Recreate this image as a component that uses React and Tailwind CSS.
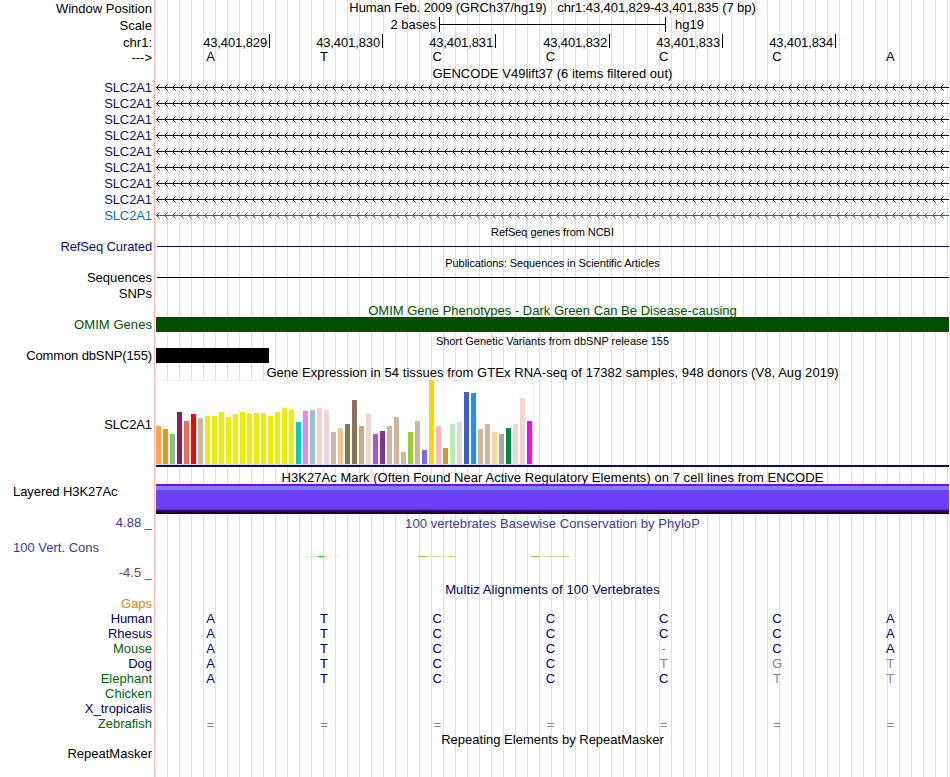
import clsx from 'clsx'

// label rows down the left side: text, row height, colour
const labels = [
  { text: 'Window Position', cls: 'h-[17px]' },
  { text: 'Scale', cls: 'h-[17px]' },
  { text: 'chr1:', cls: 'h-[15px]' },
  { text: '--->', cls: 'h-[30px]' },
  ...Array.from({ length: 8 }, () => ({ text: 'SLC2A1', cls: 'h-4 tracking-[-0.1px] text-[#0c0c78]' })),
  { text: 'SLC2A1', cls: 'h-[31px] tracking-[-0.1px] text-[#0c6cb0]' },
  { text: 'RefSeq Curated', cls: 'h-[31px] tracking-[-0.12px] text-[#0c0c78]' },
  { text: 'Sequences', cls: 'h-4' },
  { text: 'SNPs', cls: 'h-[31px]' },
  { text: 'OMIM Genes', cls: 'h-[31px] tracking-[0.06px] text-[#005000]' },
  { text: 'Common dbSNP(155)', cls: 'h-[69px] tracking-[-0.12px]' },
  { text: 'SLC2A1', cls: 'h-[67px] tracking-[-0.1px]' },
  { text: 'Layered H3K27Ac', cls: 'h-[31px] tracking-[-0.07px] text-left pl-[13px]' },
  { text: '4.88 _', cls: 'h-[25px] text-[#3c3c8c]' },
  { text: '100 Vert. Cons', cls: 'h-[25px] text-left pl-[13px] text-[#3c3c8c]' },
  { text: '-4.5 _', cls: 'h-[31px] text-[#8c3c3c]' },
  { text: 'Gaps', cls: 'h-[15px] text-[#e68a00]' },
  { text: 'Human', cls: 'h-[15px] tracking-[-0.12px] text-[#000064]' },
  { text: 'Rhesus', cls: 'h-[15px] text-[#000064]' },
  { text: 'Mouse', cls: 'h-[15px] text-[#006400]' },
  { text: 'Dog', cls: 'h-[15px] text-[#000064]' },
  { text: 'Elephant', cls: 'h-[15px] text-[#006400]' },
  { text: 'Chicken', cls: 'h-[15px] text-[#006400]' },
  { text: 'X_tropicalis', cls: 'h-[15px] text-[#000064]' },
  { text: 'Zebrafish', cls: 'h-[30px] text-[#006400]' },
  { text: 'RepeatMasker', cls: 'h-[31px]' },
]

const positions = [
  { text: '43,401,829', cls: 'w-[114px]' },
  { text: '43,401,830', cls: 'w-[113px]' },
  { text: '43,401,831', cls: 'w-[113px]' },
  { text: '43,401,832', cls: 'w-[114px]' },
  { text: '43,401,833', cls: 'w-[113px]' },
  { text: '43,401,834', cls: 'w-[113px]' },
]

// [height, colour] per tissue
const gtex = [
  [38, '#ffa54f'], [35, '#ee9a00'], [30, '#8fbc8f'], [52, '#8b1c62'], [43, '#ee6a50'], [50, '#ff0000'],
  [46, '#cdb79e'], [48, '#eeee00'], [48, '#eeee00'], [52, '#eeee00'], [47, '#eeee00'], [50, '#eeee00'],
  [52, '#eeee00'], [50, '#eeee00'], [51, '#eeee00'], [51, '#eeee00'], [48, '#eeee00'], [52, '#eeee00'],
  [56, '#eeee00'], [54, '#eeee00'], [42, '#00cdcd'], [53, '#ee82ee'], [54, '#9ac0cd'], [56, '#eed5d2'],
  [54, '#eed5d2'], [32, '#cdb79e'], [36, '#eec591'], [40, '#8b7355'], [64, '#8b7355'], [38, '#cdaa7d'],
  [50, '#eed5d2'], [30, '#b452cd'], [33, '#7a378b'], [38, '#cdb79e'], [47, '#cdb79e'], [12, '#cdb79e'],
  [32, '#9acd32'], [43, '#cdb79e'], [14, '#7a67ee'], [84, '#ffd700'], [38, '#ffb6c1'], [16, '#cd9b1d'],
  [40, '#b4eeb4'], [42, '#d9d9d9'], [72, '#3a5fcd'], [71, '#1e90ff'], [35, '#cdb79e'], [40, '#cdb79e'],
  [32, '#ffd39b'], [30, '#a6a6a6'], [36, '#008b45'], [40, '#eed5d2'], [66, '#eed5d2'], [43, '#ff00ff'],
]

// lower case marks a base that differs from the human one
const alignments = ['ATCCCCA', 'ATCCCCA', 'ATCC-CA', 'ATCCtgt', 'ATCCCtt', '       ', '       ', '=======']

function Title({ className, children }) {
  return <div className={clsx('text-center whitespace-pre shrink-0', className)}>{children}</div>
}

function Bases({ seq, className }) {
  return (
    <div className={clsx('grid grid-cols-7 w-[793px] -ml-0.5 text-center shrink-0', className)}>
      {seq.split('').map((b, i) => (
        <span key={i} className={clsx(/[a-z=-]/.test(b) && 'text-[#8282b4]', b === '=' && 'pt-px')}>
          {b.toUpperCase()}
        </span>
      ))}
    </div>
  )
}

function Intron({ id, className }) {
  return (
    <svg className={clsx('block h-4 w-[793px] shrink-0', className)} shapeRendering="crispEdges">
      <defs>
        <pattern id={id} x="0" y="0" width="8" height="16" patternUnits="userSpaceOnUse">
          <path d="M1 6h1v1h-1z M1 8h1v1h-1z M2 5h1v1h-1z M2 9h1v1h-1z" fill="currentColor" />
          <path d="M3 4h1v1h-1z M3 10h1v1h-1z" fill="currentColor" opacity="0.6" />
        </pattern>
      </defs>
      <rect width="793" height="16" fill={`url(#${id})`} />
      <rect y="7" width="793" height="1" fill="currentColor" />
    </svg>
  )
}

function Conservation() {
  return (
    <div className="flex h-px mt-[25px] mb-[25px] shrink-0">
      <div className="w-4 ml-[146px] bg-[#dcffdc]" />
      <div className="w-1.5 bg-[#00f000]" />
      <div className="w-4 bg-[#dcffdc]" />
      <div className="w-2 ml-[78px] bg-[#bcb43c]" />
      <div className="w-[23px] bg-[#dcdca0]" />
      <div className="w-[7px] bg-[#cdc878]" />
      <div className="w-2 ml-[75px] bg-[#bcb43c]" />
      <div className="w-[23px] bg-[#dcdca0]" />
      <div className="w-[7px] bg-[#cdc878]" />
    </div>
  )
}

export default function App() {
  return (
    <div className="flex w-[950px] h-[777px] overflow-hidden bg-white text-black text-[13px] leading-[15px] font-['Liberation_Sans',Arial,sans-serif]">
      <div className="w-[155px] shrink-0 border-r border-[#ffb4b4] pr-0.5 pt-px text-right whitespace-pre">
        {labels.map((l, i) => (
          <div key={i} className={l.cls}>{l.text}</div>
        ))}
      </div>

      <div className="flex flex-col w-[793px] ml-px shrink-0 bg-[repeating-linear-gradient(to_right,transparent_0px,transparent_11px,#dcdcf8_11px,#dcdcf8_12px)]">
        <Title className="h-[17px] tracking-[-0.075px]">Human Feb. 2009 (GRCh37/hg19)   chr1:43,401,829-43,401,835 (7 bp)</Title>

        <div className="flex h-[17px] shrink-0">
          <div className="w-[283px] pr-[3px] text-right">2 bases</div>
          <div className="flex items-center w-[227px] h-[15px] border-x border-black">
            <div className="w-full h-px bg-black" />
          </div>
          <div className="pl-[9px]">hg19</div>
        </div>

        <div className="flex h-[15px] shrink-0">
          {positions.map(p => (
            <div key={p.text} className={clsx('h-[14px] pt-px pr-0.5 border-r border-black text-right tracking-[-0.12px]', p.cls)}>{p.text}</div>
          ))}
        </div>
        <Bases seq="ATCCCCA" className="h-[17px]" />

        <Title className="h-[14px] tracking-[0.035px]">GENCODE V49lift37 (6 items filtered out)</Title>
        {Array.from({ length: 8 }, (_, i) => (
          <Intron key={i} id={`intron-${i}`} className="text-[#0c0c78]" />
        ))}
        <Intron id="intron-8" className="text-[#0c6cb0]" />

        <Title className="h-[21px] pt-px text-[11px] tracking-[-0.06px]">RefSeq genes from NCBI</Title>
        <div className="h-px ml-px mt-px shrink-0 bg-[#0c0c78]" />
        <Title className="h-[30px] pt-[9px] text-[11px] tracking-[-0.07px]">Publications: Sequences in Scientific Articles</Title>
        <div className="h-px ml-px shrink-0 bg-black" />

        <Title className="h-[39px] pt-[25px] text-[#005000]">OMIM Gene Phenotypes - Dark Green Can Be Disease-causing</Title>
        <div className="h-[15px] shrink-0 bg-[#005000]" />
        <Title className="h-4 pt-0.5 text-[11px]">Short Genetic Variants from dbSNP release 155</Title>
        <div className="w-[113px] h-[15px] shrink-0 bg-black" />

        <Title className="h-[17px] pt-0.5 tracking-[0.055px]">Gene Expression in 54 tissues from GTEx RNA-seq of 17382 samples, 948 donors (V8, Aug 2019)</Title>
        <div className="flex items-end gap-0.5 w-[378px] h-[85px] shrink-0 bg-white border-b border-b-[#dcdcdc] shadow-[inset_-1px_1px_0_#f0f0f0]">
          {gtex.map(([height, background], i) => (
            <div key={i} className="w-[5px] shrink-0" style={{ height, background }} />
          ))}
        </div>
        <div className="h-0.5 shrink-0 bg-[#0c0c78]" />

        <Title className="h-[17px] pt-[3px] tracking-[0.05px]">H3K27Ac Mark (Often Found Near Active Regulatory Elements) on 7 cell lines from ENCODE</Title>
        <div className="shrink-0">
          <div className="h-0.5 bg-[#8000ff]" />
          <div className="h-1 bg-[#8080ff]" />
          <div className="h-[19px] bg-[#6c40ff]" />
          <div className="h-px bg-[#5424c8]" />
          <div className="h-px bg-[#2d1888]" />
          <div className="h-0.5 bg-[#38002f]" />
          <div className="h-px bg-[#180010]" />
        </div>

        <Title className="h-[17px] pt-0.5 tracking-[0.06px] text-[#3c3c8c]">100 vertebrates Basewise Conservation by PhyloP</Title>
        <Conservation />

        <Title className="h-[29px] tracking-[0.1px] text-[#000064]">Multiz Alignments of 100 Vertebrates</Title>
        {alignments.map((seq, i) => (
          <Bases key={i} seq={seq} className="h-[15px] text-[#000064]" />
        ))}
        <Title className="h-[15px] mt-px">Repeating Elements by RepeatMasker</Title>
      </div>
    </div>
  )
}
